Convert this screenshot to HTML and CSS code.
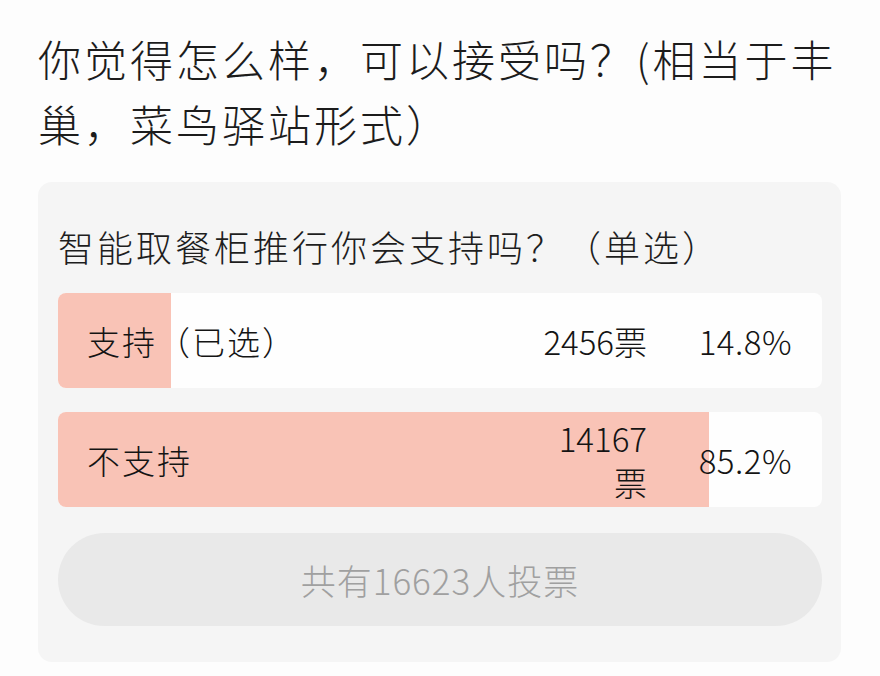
FILE: index.html
```html
<!DOCTYPE html>
<html lang="zh-CN">
<head>
  <meta charset="UTF-8" />
  <meta name="viewport" content="width=device-width, initial-scale=1.0"/>
  <title>投票</title>
  <link rel="stylesheet" href="styles.css">
</head>
<body>
  <h1 class="post-title">你觉得怎么样，可以接受吗？(相当于丰巢，菜鸟驿站形式）</h1>

  <div class="poll">
    <div class="poll-question">智能取餐柜推行你会支持吗？（单选）</div>

    <div class="option">
      <div class="fill" style="width: 14.8%"></div>
      <span class="label">支持（已选）</span>
      <span class="count">2456票</span>
      <span class="percent">14.8%</span>
    </div>

    <div class="option">
      <div class="fill" style="width: 85.2%"></div>
      <span class="label">不支持</span>
      <span class="count">14167票</span>
      <span class="percent">85.2%</span>
    </div>

    <div class="total">共有16623人投票</div>
  </div>
</body>
</html>
```

FILE: styles.css
```css
body {
  margin: 0;
  padding: 26px 30px 0 38px;
  background: #fdfdfd;
  color: #1a1a1a;
  font-family: "Noto Sans CJK SC", "Noto Sans", sans-serif;
}

.post-title {
  margin: 0 0 26px 0;
  font-size: 43px;
  font-weight: 300;
  letter-spacing: 3px;
  line-height: 65px;
  color: #1c1c1c;
}

.poll {
  margin-right: 9px;
  padding: 40px 19px 36px 20px;
  background: #f5f5f5;
  border-radius: 14px;
}

.poll-question {
  font-size: 36px;
  font-weight: 300;
  letter-spacing: 3px;
  line-height: 48px;
  margin-bottom: 23px;
  color: #1e1e1e;
}

.option {
  position: relative;
  display: flex;
  align-items: center;
  height: 95px;
  margin-bottom: 24px;
  padding: 0 30px 0 29px;
  background: #fefefe;
  border-radius: 8px;
  overflow: hidden;
  font-size: 33px;
  font-weight: 300;
  letter-spacing: 2px;
  line-height: 44px;
  color: #141414;
}

.fill {
  position: absolute;
  left: 0;
  top: 0;
  bottom: 0;
  background: #f9c3b6;
}

.label,
.count,
.percent {
  position: relative;
}

.label { flex: 1; }

.count {
  width: 112px;
  text-align: right;
  letter-spacing: 0;
}

.percent {
  width: 145px;
  text-align: right;
  letter-spacing: 0.5px;
}

.total {
  margin-top: 26px;
  height: 93px;
  display: flex;
  align-items: center;
  justify-content: center;
  background: #e9e9e9;
  border-radius: 47px;
  color: #a0a0a0;
  font-size: 35px;
  font-weight: 300;
  letter-spacing: 1px;
}
```
